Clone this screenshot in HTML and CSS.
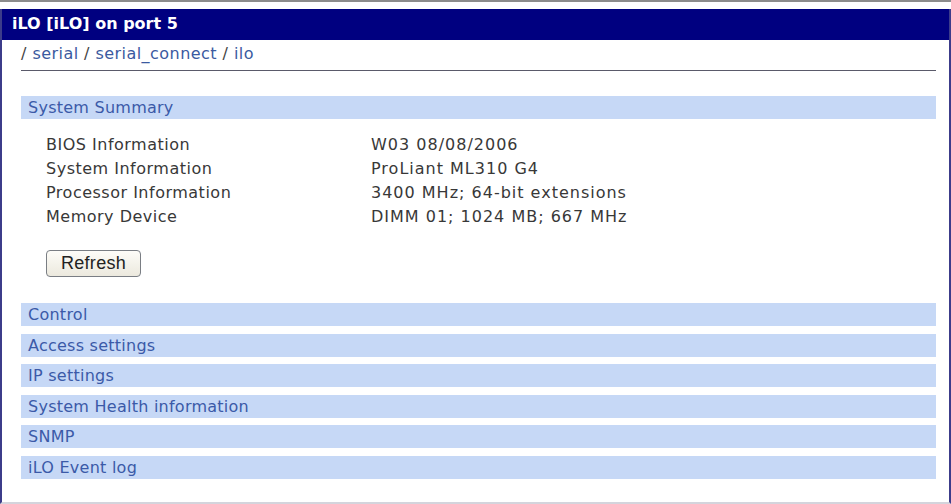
FILE: index.html
```html
<!DOCTYPE html>
<html lang="en">
<head>
    <meta charset="UTF-8">
    <title>iLO [iLO] on port 5</title>
    <link rel="stylesheet" href="styles.css">
</head>
<body>

    <div class="frame">
        <div class="panel">
            <div class="title">iLO [iLO] on port 5</div>

            <div class="content">
                <div class="crumbs">
                    / <a href="#">serial</a> / <a href="#">serial_connect</a> / <a href="#">ilo</a>
                </div>

                <div class="section-head">System Summary</div>
                <div class="summary">
                    <div class="row"><span class="label">BIOS Information</span><span class="value">W03 08/08/2006</span></div>
                    <div class="row"><span class="label">System Information</span><span class="value">ProLiant ML310 G4</span></div>
                    <div class="row"><span class="label">Processor Information</span><span class="value">3400 MHz; 64-bit extensions</span></div>
                    <div class="row"><span class="label">Memory Device</span><span class="value">DIMM 01; 1024 MB; 667 MHz</span></div>
                    <button class="refresh">Refresh</button>
                </div>

                <div class="sections">
                    <div class="section-head">Control</div>
                    <div class="section-head">Access settings</div>
                    <div class="section-head">IP settings</div>
                    <div class="section-head">System Health information</div>
                    <div class="section-head">SNMP</div>
                    <div class="section-head">iLO Event log</div>
                </div>
            </div>
        </div>
    </div>

</body>
</html>
```

FILE: styles.css
```css
body {
    margin: 0;
    background-color: #fff;
    font-family: "DejaVu Sans", Verdana, sans-serif;
    font-size: 16px;
    letter-spacing: 0.5px;
    color: #383838;
}

.frame {
    border-top: 2px solid #8c8c8c;
    padding-top: 7px;
}

.panel {
    border-left: 2px solid #3c3c8a;
    border-right: 2px solid #3c3c8a;
    border-bottom: 2px solid #d4d4dc;
    height: 495px;
    box-sizing: border-box;
}

.title {
    background-color: #000080;
    color: #fff;
    font-weight: bold;
    height: 31px;
    line-height: 30px;
    padding-left: 10px;
    letter-spacing: 0;
}

.content {
    padding: 0 13px 0 19px;
}

.crumbs {
    padding: 3px 0 0 0;
    height: 27px;
    line-height: 22px;
    border-bottom: 1px solid #5a5a6a;
    color: #444;
    letter-spacing: 0.45px;
}

.crumbs a {
    color: #3b5aa0;
    text-decoration: none;
}

.crumbs + .section-head {
    margin-top: 25px;
}

.section-head {
    background-color: #c6d8f6;
    color: #3b5aa8;
    height: 23px;
    line-height: 23px;
    padding-left: 7px;
    letter-spacing: 0.25px;
}

.summary {
    padding: 14px 0 26px 25px;
}

.row {
    display: flex;
    height: 24px;
    line-height: 24px;
}

.label {
    width: 325px;
}

.value {
    letter-spacing: 1px;
}

.refresh {
    margin-top: 21px;
    width: 95px;
    height: 27px;
    font-family: "Liberation Sans", Arial, sans-serif;
    font-size: 18px;
    letter-spacing: 0.3px;
    color: #222;
    background: linear-gradient(#fdfcf8, #ece9de);
    border: 1px solid #7a7e84;
    border-radius: 4px;
    padding: 0;
}

.sections {
    display: flex;
    flex-direction: column;
    gap: 7.6px;
}
```
